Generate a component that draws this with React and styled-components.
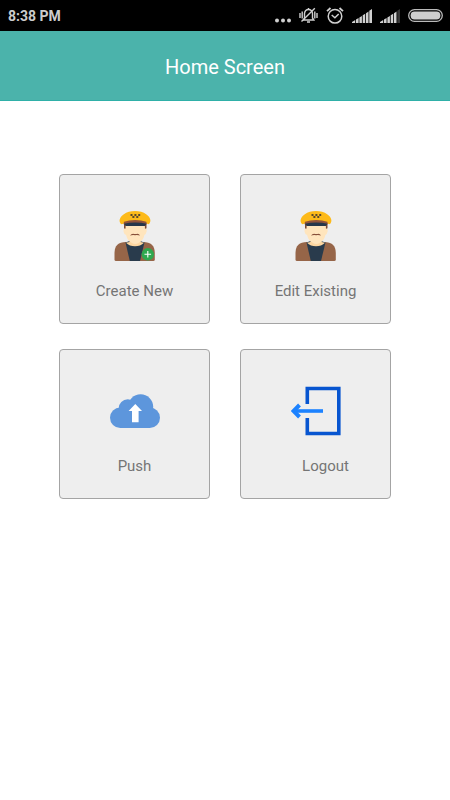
import React from "react";
import styled, { createGlobalStyle } from "styled-components";

const GlobalStyle = createGlobalStyle`
  *, *::before, *::after { box-sizing: border-box; }
  body {
    margin: 0;
    background: #ffffff;
    font-family: Roboto, "Noto Sans", sans-serif;
  }
`;

const Screen = styled.div`
  min-height: 100vh;
  background: #ffffff;
`;

const StatusBar = styled.div`
  display: flex;
  align-items: center;
  justify-content: space-between;
  height: 31px;
  padding: 0 7px 0 8px;
  background: #000000;
  color: #cccccc;
`;

const Clock = styled.time`
  padding-top: 1px;
  font-size: 14px;
  line-height: 20px;
  font-weight: 700;
`;

const StatusIcons = styled.div`
  display: flex;
  align-items: center;
  gap: 8px;

  svg { display: block; }
`;

const Header = styled.header`
  display: flex;
  align-items: center;
  justify-content: center;
  height: 70px;
  background: #4bb3ab;
  border-bottom: 1px solid #2fb0a8;
`;

const Title = styled.h1`
  margin: 0;
  padding-top: 2px;
  font-size: 20px;
  line-height: 24px;
  font-weight: 400;
  color: #ffffff;
`;

const Menu = styled.main`
  display: grid;
  grid-template-columns: 1fr 1fr;
  gap: 25px 30px;
  max-width: 600px;
  margin: 0 auto;
  padding: 73px 59px;
`;

const Tile = styled.button`
  display: flex;
  flex-direction: column;
  align-items: center;
  min-height: 150px;
  padding: 36px 0 0;
  border: 1px solid #a4a4a4;
  border-radius: 4px;
  background: #eeeeee;
  color: #757575;
  font-family: inherit;
  cursor: pointer;

  svg { display: block; }
`;

const TileLabel = styled.span`
  margin-top: 20px;
  padding-left: ${({ $indent }) => $indent || "0"};
  font-size: 15px;
  line-height: 20px;
`;

function MoreDots() {
  return (
    <svg width="16" height="17" viewBox="0 0 16 17" fill="#d0d0d0" aria-hidden="true">
      <circle cx="2" cy="13.5" r="2" />
      <circle cx="8" cy="13.5" r="2" />
      <circle cx="14" cy="13.5" r="2" />
    </svg>
  );
}

function VibrateBell() {
  return (
    <svg width="19" height="17" viewBox="0 0 19 17" fill="none" stroke="#d0d0d0" strokeWidth="1.4" aria-hidden="true">
      <path d="M4.5 13 5.5 11V6.5Q6 2.5 9.5 2.5T13.5 6.5V11L14.8 13Z" />
      <path d="M9.5 1v1.5M8 15h3M2.5 14.5 15.8 1.2" />
      <path d="M1 6v5M3.2 4.5v7M15.8 4.5v7M18 6v5" />
    </svg>
  );
}

function AlarmClock() {
  return (
    <svg width="18" height="17" viewBox="0 0 18 17" fill="none" stroke="#d0d0d0" strokeWidth="1.5" aria-hidden="true">
      <circle cx="9" cy="9.3" r="6.8" />
      <path d="m5.7 8 3.2 2.7L12.7 7" />
      <path d="M1 4.2 4.5 1M13.5 1 17 4.2" strokeWidth="1.8" />
    </svg>
  );
}

function Signal({ weak }) {
  return (
    <svg width="20" height="17" viewBox="0 0 20 17" fill="#d0d0d0" aria-hidden="true">
      <path d="M0 16v-1l3.2-2v3zM4 12.5l2.6-1.4V16H4zM7.4 10.4l2.5-1.5V16H7.4zM10.7 8.3l2.5-1.5V16h-2.5z" />
      <path d="M14 6.2 16.5 4.6V16H14z" />
      <path d="M17.3 3.8 20 2v14h-2.7z" fill={weak ? "#363636" : "#d0d0d0"} />
    </svg>
  );
}

function Battery() {
  return (
    <svg width="35" height="13" viewBox="0 0 35 13" aria-hidden="true">
      <rect x="0.7" y="0.7" width="33.6" height="11.6" rx="5.8" fill="none" stroke="#bababa" strokeWidth="1.3" />
      <rect x="2.6" y="2.6" width="29.8" height="7.8" rx="3.9" fill="#cfcfcf" />
    </svg>
  );
}

function Driver({ adding }) {
  return (
    <svg width="50" height="50" viewBox="0 0 50 50" aria-hidden="true">
      <path d="M4.5 48.5V42Q4.5 31 16 31H33Q44.8 31 44.8 42V48.5Q44.8 50 43.3 50H6Q4.5 50 4.5 48.5Z" fill="#966548" />
      <path d="M15.5 31.5 19.5 30H30L34.5 31.5 30 50H19.8Z" fill="#293b4c" />
      <path d="M19.5 28H30.5V31L34 31.7Q30.5 35.3 25 35.3T16 31.7L19.5 31Z" fill="#fdd7a1" />
      <path d="M14 12H36.5V17L35.5 18.5H15L14 17Z" fill="#7c4b35" />
      <path d="M15.6 13H34.9V17.6Q37.2 17.5 36.6 20.5T34.4 24Q33.3 29.6 28.5 32Q25.2 33.8 22 32Q17.2 29.6 16.1 24Q13.9 23.3 13.5 20.5T15.6 17.6Z" fill="#ffe5bd" />
      <path d="M20 24.4Q21.5 22.5 24 22.9H26.5Q29 22.5 30 24.4Q27.5 23.9 25.1 24.2Q22.5 23.9 20 24.4Z" fill="#875039" />
      <path d="M11.5 13.3C8.5 11 9 6.5 13.5 3.4C17 .9 20.5 0 25 0S33 .9 36.5 3.4C41 6.5 41.5 11 38.6 13.3L36.5 12.5H14Z" fill="#fdba19" />
      <path d="M13.5 13.2 14 10.7Q19 9 25.2 9T36.3 10.7L36.8 13.2Z" fill="#93543a" />
      <path d="M14 12.7Q19 11.6 25.2 11.6T36.5 12.7L34.8 15H15.7Z" fill="#26374b" />
      <path d="M20.5 3h2v2h-2zM24.4 3h2v2h-2zM28.2 3h2v2h-2zM22.4 5h2v2h-2zM26.3 5h2v2h-2z" fill="#59482d" />
      {adding && (
        <>
          <circle cx="37.8" cy="43.3" r="6.2" fill="#2fa84f" />
          <path d="M37.8 40v6.6M34.5 43.3h6.6" stroke="#ffffff" strokeWidth="1.1" />
        </>
      )}
    </svg>
  );
}

function CloudUpload() {
  return (
    <svg width="50" height="50" viewBox="0 0 50 50" aria-hidden="true">
      <g fill="#5d96dc">
        <circle cx="10.2" cy="31.8" r="10.2" />
        <circle cx="39.8" cy="31.8" r="10.2" />
        <circle cx="17.8" cy="22.5" r="9.2" />
        <circle cx="30.6" cy="20.8" r="12.6" />
        <rect x="10" y="24" width="30" height="18" />
      </g>
      <path d="M25.3 18 32 25h-3.4v11.2H22V25h-3.4Z" fill="#ffffff" />
    </svg>
  );
}

function LogoutDoor() {
  return (
    <svg width="50" height="50" viewBox="0 0 50 50" fill="none" aria-hidden="true">
      <path d="M16.3 18V2.5H47.8V47.5H16.3V32" stroke="#0755d0" strokeWidth="3.6" />
      <path d="M32 25H4" stroke="#1c82ff" strokeWidth="3.6" />
      <path d="M8.5 19 2.5 25 8.5 31" stroke="#1c82ff" strokeWidth="4" />
    </svg>
  );
}

const actions = [
  { label: "Create New", icon: <Driver adding /> },
  { label: "Edit Existing", icon: <Driver /> },
  { label: "Push", icon: <CloudUpload /> },
  { label: "Logout", icon: <LogoutDoor />, indent: "20px" },
];

export default function App() {
  return (
    <Screen>
      <GlobalStyle />
      <StatusBar>
        <Clock>8:38 PM</Clock>
        <StatusIcons>
          <MoreDots />
          <VibrateBell />
          <AlarmClock />
          <Signal />
          <Signal weak />
          <Battery />
        </StatusIcons>
      </StatusBar>
      <Header>
        <Title>Home Screen</Title>
      </Header>
      <Menu>
        {actions.map(({ label, icon, indent }) => (
          <Tile key={label} type="button">
            {icon}
            <TileLabel $indent={indent}>{label}</TileLabel>
          </Tile>
        ))}
      </Menu>
    </Screen>
  );
}
